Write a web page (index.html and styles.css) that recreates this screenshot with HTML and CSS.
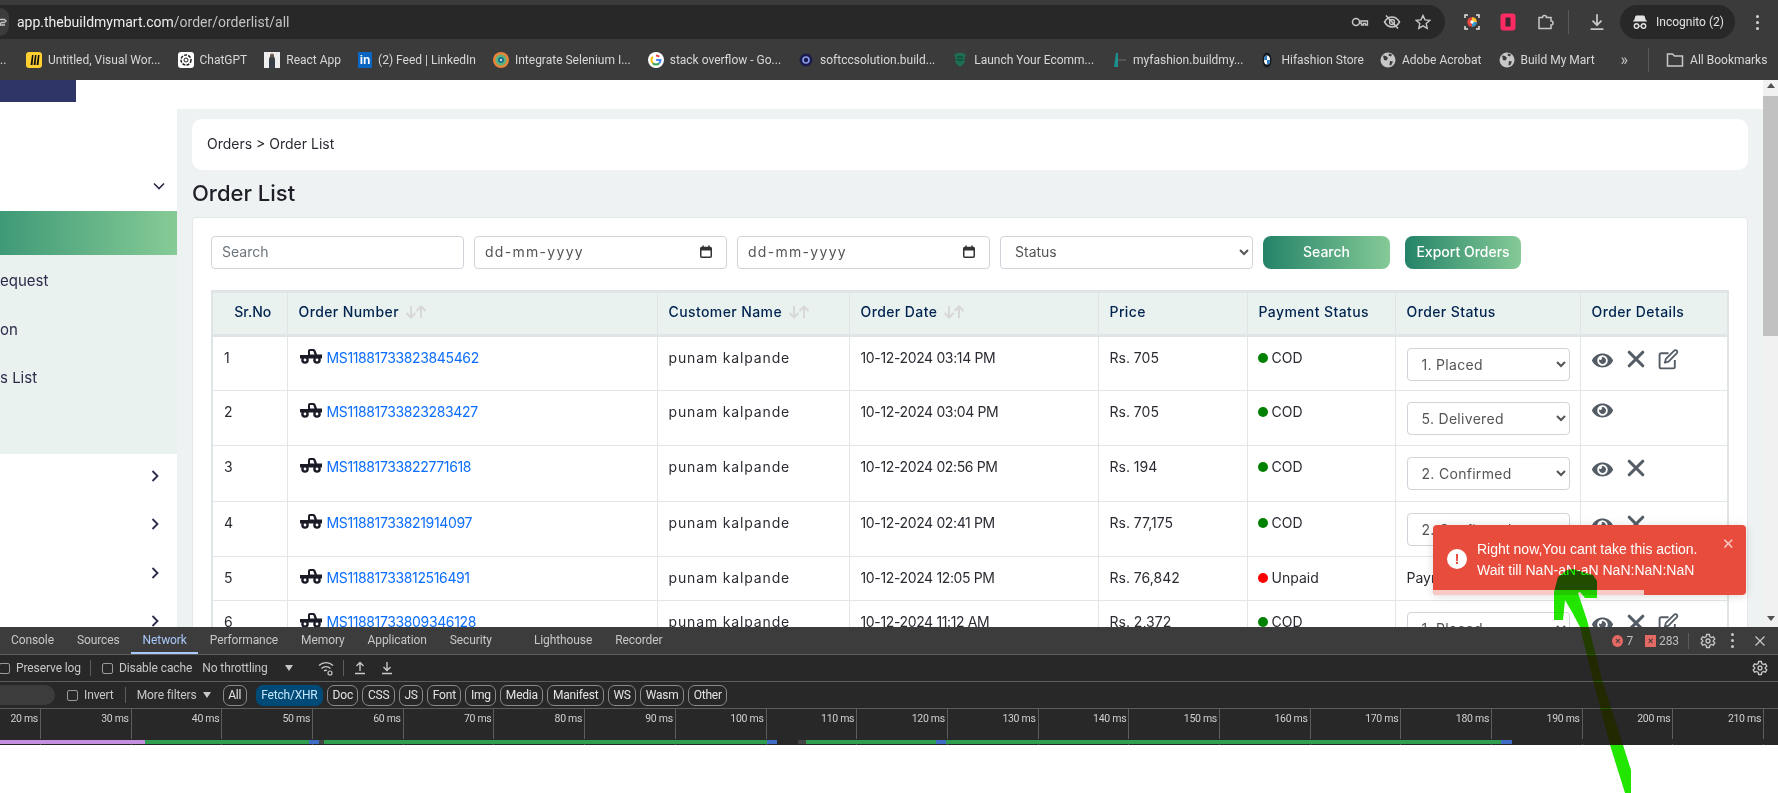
FILE: index.html
```html
<!DOCTYPE html>
<html lang="en">
<head>
    <meta charset="UTF-8">
    <title>Order List</title>
    <link rel="stylesheet" href="styles.css">
</head>
<body>
    <svg class="sprites" width="0" height="0">
        <symbol id="i-eye" viewBox="0 0 576 512"><path fill="currentColor" d="M572.52 241.4C518.29 135.59 410.93 64 288 64S57.68 135.64 3.48 241.41a32.35 32.35 0 0 0 0 29.19C57.71 376.41 165.07 448 288 448s230.32-71.64 284.52-177.41a32.35 32.35 0 0 0 0-29.19zM288 400a144 144 0 1 1 144-144 143.93 143.93 0 0 1-144 144zm0-240a95.31 95.31 0 0 0-25.31 3.79 47.85 47.85 0 0 1-66.9 66.9A95.78 95.78 0 1 0 288 160z"/></symbol>
        <symbol id="i-x" viewBox="0 0 16 16"><path d="M2 2l12 12M14 2L2 14" fill="none" stroke="currentColor" stroke-width="2.8" stroke-linecap="round"/></symbol>
        <symbol id="i-edit" viewBox="0 0 20 20"><path d="M16 10.5V17a1.5 1.5 0 0 1-1.5 1.500H3A1.500 1.500 0 0 1 1.500 17V5.500A1.500 1.500 0 0 1 3 4h7" fill="none" stroke="currentColor" stroke-width="1.800"/><path d="M7.500 9.500L15.500 1.500a1.500 1.500 0 0 1 2.300 0.200 1.500 1.500 0 0 1 0.200 2.300L10 12l-3.500 1z" fill="none" stroke="currentColor" stroke-width="1.700" stroke-linejoin="round"/></symbol>
        <symbol id="i-car" viewBox="0 0 24 16"><path fill="#1b1b27" d="M9 7V3q0-2 2-2h3.500q1.500 0 2 1.500L18 6.500h5V10.500H1V7z"/><path fill="#fff" d="M11 6.500V3h3.200l1.300 3.500z"/><circle cx="6" cy="12" r="3.800" fill="#1b1b27"/><circle cx="18" cy="12" r="3.800" fill="#1b1b27"/><circle cx="6" cy="12" r="1.400" fill="#fff"/><circle cx="18" cy="12" r="1.400" fill="#fff"/></symbol>
        <symbol id="i-globe" viewBox="0 0 16 16"><circle cx="8" cy="8" r="7.500" fill="#c7c7c7"/><path fill="#3b3b3b" d="M3 3.500l3 .5 2 2-1.500 2.500L4 8zM10 9l3 .5-2 4-1.500-.5zM9 1.500l3 1-1 2-2.500-1z"/></symbol>
        <symbol id="i-gear" viewBox="0 0 16 16"><path d="M6.600 1.500h2.800l.4 2 1.700 1 1.900-.7 1.400 2.400-1.500 1.300v1l1.500 1.300-1.400 2.400-1.900-.7-1.700 1-.4 2H6.600l-.4-2-1.700-1-1.900.7-1.400-2.400 1.500-1.300v-1L1.200 6.200l1.400-2.400 1.900.7 1.700-1z" fill="none" stroke="currentColor" stroke-width="1.300"/><circle cx="8" cy="8" r="2" fill="none" stroke="currentColor" stroke-width="1.300"/></symbol>
        <symbol id="i-down" viewBox="0 0 14 14"><path d="M7 1v8M3.500 6L7 9.500 10.500 6M2 12.500h10" fill="none" stroke="currentColor" stroke-width="1.400"/></symbol>
        <symbol id="i-up" viewBox="0 0 14 14"><path d="M7 10V2M3.500 5L7 1.500 10.500 5M2 12.500h10" fill="none" stroke="currentColor" stroke-width="1.400"/></symbol>
        <symbol id="i-sort" viewBox="0 0 22 14"><path d="M6 1v11M1.500 8L6 12.500 10.500 8M16 13V2M11.500 6L16 1.500 20.500 6" fill="none" stroke="currentColor" stroke-width="2"/></symbol>
        <symbol id="i-cal" viewBox="0 0 12 13"><rect x="0.750" y="2.500" width="10.500" height="9.750" rx="1" fill="none" stroke="#333" stroke-width="1.500"/><path d="M0.750 3h10.500v2.500H0.750z" fill="#333"/><path d="M3 0.500v2.500M9 0.500v2.500" stroke="#333" stroke-width="1.500"/></symbol>
        <symbol id="i-chev-d" viewBox="0 0 14 14"><path d="M2 4.500l5 5 5-5" fill="none" stroke="currentColor" stroke-width="1.600"/></symbol>
        <symbol id="i-chev-r" viewBox="0 0 14 14"><path d="M4.500 2l5 5-5 5" fill="none" stroke="currentColor" stroke-width="1.800"/></symbol>
    </svg>

    <!-- browser chrome -->
    <header class="browser">
        <div class="address-row">
            <div class="urlbar">
                <span class="site-chip"><svg width="9" height="14" viewBox="0 0 9 14"><path d="M0 4.500h4.500l1.500 1.500-1.500 1.500H1.500L0 9M0 10h5" fill="none" stroke="#c7c7c7" stroke-width="1.300"/></svg></span>
                <span class="url">app.thebuildmymart.com<span class="url-path">/order/orderlist/all</span></span>
                <span class="url-icons">
                    <svg width="18" height="12" viewBox="0 0 18 12"><circle cx="5" cy="6" r="3.500" fill="none" stroke="#c7c7c7" stroke-width="1.500"/><path d="M8.500 5h8v4h-2V7.500h-2V9h-2V7H8.500" fill="none" stroke="#c7c7c7" stroke-width="1.300"/></svg>
                    <svg width="18" height="18" viewBox="0 0 18 18"><path d="M1.500 9S4.500 4 9 4s7.500 5 7.500 5-3 5-7.500 5-7.500-5-7.500-5zM3 2.500l12 13" fill="none" stroke="#c7c7c7" stroke-width="1.500"/><circle cx="9" cy="9" r="2.500" fill="none" stroke="#c7c7c7" stroke-width="1.300"/></svg>
                    <svg width="16" height="16" viewBox="0 0 16 16"><path d="M8 1.500l2 4.400 4.700.5-3.500 3.200 1 4.700L8 11.900l-4.200 2.400 1-4.700L1.300 6.400 6 5.900z" fill="none" stroke="#c7c7c7" stroke-width="1.400"/></svg>
                </span>
            </div>
            <div class="ext-icons">
                <svg width="16" height="16" viewBox="0 0 16 16"><path d="M1 4V1h3M12 1h3v3M15 12v3h-3M4 15H1v-3" fill="none" stroke="#e8e8e8" stroke-width="1.500"/><circle cx="8" cy="8" r="4.800" fill="#e9453f"/><path d="M8 3.200A4.800 4.800 0 0 1 12.800 8H8z" fill="#f7c52d"/><path d="M8 8h4.800A4.800 4.800 0 0 1 8 12.800z" fill="#2e9bd6"/><circle cx="8" cy="8" r="1.700" fill="#fff"/></svg>
                <svg width="16" height="18" viewBox="0 0 16 18"><rect x="0.500" y="0.500" width="15" height="17" rx="3" fill="#ff2b62"/><rect x="5.500" y="4.500" width="5" height="9" fill="#3b2730"/></svg>
                <svg width="18" height="18" viewBox="0 0 18 18"><path d="M3 4.500h3.500a2 2 0 0 1 4 0H15V8a2 2 0 0 1 0 4v3.500H3z" fill="none" stroke="#c7c7c7" stroke-width="1.500"/></svg>
                <span class="vsep"></span>
                <svg class="chrome-dl" width="18" height="18"><use href="#i-down"/></svg>
            </div>
            <div class="incognito">
                <svg width="16" height="16" viewBox="0 0 16 16"><path d="M4 2h8l1.500 4.500h-11zM1 7h14" fill="#e3e3e3" stroke="#e3e3e3"/><circle cx="4.500" cy="12" r="2.200" fill="none" stroke="#e3e3e3" stroke-width="1.400"/><circle cx="11.500" cy="12" r="2.200" fill="none" stroke="#e3e3e3" stroke-width="1.400"/><path d="M6.700 12h2.600" stroke="#e3e3e3"/></svg>
                Incognito (2)
            </div>
            <div class="dots"><i></i><i></i><i></i></div>
        </div>
        <nav class="bookmarks">
            <span class="bm bm-cut">..</span>
            <span class="bm"><svg width="16" height="16" viewBox="0 0 16 16"><rect width="16" height="16" rx="3" fill="#ffd02f"/><path d="M4.500 13L6 3h1.500L6.500 13zM7.500 13L9 3h1.500L9.500 13zM10.500 13L12 3h1.500L12.500 13z" fill="#111"/></svg>Untitled, Visual Wor...</span>
            <span class="bm"><svg width="16" height="16" viewBox="0 0 16 16"><rect width="16" height="16" rx="3" fill="#fff"/><circle cx="8" cy="8" r="5" fill="none" stroke="#222" stroke-width="1.500" stroke-dasharray="3 1.200"/><circle cx="8" cy="8" r="2" fill="none" stroke="#222"/></svg>ChatGPT</span>
            <span class="bm"><svg width="16" height="16" viewBox="0 0 16 16"><rect width="16" height="16" fill="#eee"/><path d="M5 16V7l2-5h2l2 5v9z" fill="#3a3f46"/><circle cx="8" cy="3.500" r="2" fill="#6b5a4e"/></svg>React App</span>
            <span class="bm"><span class="in-logo">in</span>(2) Feed | LinkedIn</span>
            <span class="bm"><svg width="16" height="16" viewBox="0 0 16 16"><circle cx="8" cy="8" r="8" fill="#e8833a"/><circle cx="8" cy="8" r="5.500" fill="#5fb37c"/><circle cx="8" cy="8" r="3" fill="#1c6f8c"/><circle cx="8" cy="8" r="1" fill="#fff"/></svg>Integrate Selenium I...</span>
            <span class="bm"><svg width="16" height="16" viewBox="0 0 16 16"><circle cx="8" cy="8" r="8" fill="#fff"/><path d="M8 3.500a4.500 4.500 0 0 1 3.200 1.300" fill="none" stroke="#ea4335" stroke-width="2"/><path d="M4.800 4.800a4.500 4.500 0 0 0 0 6.400" fill="none" stroke="#fbbc05" stroke-width="2"/><path d="M4.800 11.200a4.500 4.500 0 0 0 6.400 0" fill="none" stroke="#34a853" stroke-width="2"/><path d="M11.200 11.200A4.500 4.500 0 0 0 12.500 8H8.200" fill="none" stroke="#4285f4" stroke-width="2"/></svg>stack overflow - Go...</span>
            <span class="bm"><svg width="16" height="16" viewBox="0 0 16 16"><circle cx="8" cy="8" r="6.500" fill="#1b1b4b"/><circle cx="8" cy="8" r="3" fill="none" stroke="#8a9be8" stroke-width="1.600"/></svg>softccsolution.build...</span>
            <span class="bm"><svg width="16" height="16" viewBox="0 0 16 16"><path d="M2 3l3-2h6l3 2-1.500 3v5L8 15l-4.500-4V6z" fill="#1f6e52"/><path d="M5 5h6M5 8h6" stroke="#0d3b2b"/></svg>Launch Your Ecomm...</span>
            <span class="bm bm-tight"><svg width="16" height="16" viewBox="0 0 16 16"><path d="M3 15l2-14h2v14z" fill="#1c8f8f"/><path d="M7 8h8" stroke="#555" stroke-width="2"/></svg>myfashion.buildmy...</span>
            <span class="bm bm-tight2"><svg width="16" height="16" viewBox="0 0 16 16"><ellipse cx="8" cy="8" rx="4.500" ry="7.500" fill="#16171a"/><ellipse cx="8" cy="8" rx="3" ry="4.500" fill="#fff"/><path d="M8 3.500V8H5a3 4.500 0 0 1 3-4.500zM8 8h3a3 4.500 0 0 1-3 4.500z" fill="#2b7bc4"/></svg>Hifashion Store</span>
            <span class="bm"><svg width="16" height="16"><use href="#i-globe"/></svg>Adobe Acrobat</span>
            <span class="bm"><svg width="16" height="16"><use href="#i-globe"/></svg>Build My Mart</span>
            <span class="bm-more">»</span>
            <span class="vsep"></span>
            <span class="bm bm-all"><svg width="18" height="16" viewBox="0 0 18 16"><path d="M1.500 2h5l2 2h8v10h-15z" fill="none" stroke="#c7c7c7" stroke-width="1.500"/></svg>All Bookmarks</span>
        </nav>
    </header>

    <!-- the page -->
    <div class="page">
        <aside class="sidebar">
            <div class="logo"></div>
            <div class="side-row side-first"><svg width="14" height="14"><use href="#i-chev-d"/></svg></div>
            <div class="side-active"></div>
            <ul class="submenu">
                <li>equest</li>
                <li>on</li>
                <li>s List</li>
            </ul>
            <div class="side-row side-gap"><svg width="14" height="14"><use href="#i-chev-r"/></svg></div>
            <div class="side-row"><svg width="14" height="14"><use href="#i-chev-r"/></svg></div>
            <div class="side-row"><svg width="14" height="14"><use href="#i-chev-r"/></svg></div>
            <div class="side-row"><svg width="14" height="14"><use href="#i-chev-r"/></svg></div>
        </aside>

        <main class="main">
            <div class="breadcrumb">Orders &gt; Order List</div>
            <h1 class="title">Order List</h1>
            <section class="card">
                <div class="filters">
                    <div class="field field-search">Search</div>
                    <div class="field field-date">dd-mm-yyyy<svg width="12" height="13"><use href="#i-cal"/></svg></div>
                    <div class="field field-date">dd-mm-yyyy<svg width="12" height="13"><use href="#i-cal"/></svg></div>
                    <select class="field field-status"><option>Status</option></select>
                    <button class="btn btn-search">Search</button>
                    <button class="btn btn-export">Export Orders</button>
                </div>
                <div class="table-wrap">
                    <table class="orders">
                        <colgroup>
                            <col class="c-sr"><col class="c-num"><col class="c-cust"><col class="c-date"><col class="c-price"><col class="c-pay"><col class="c-status"><col class="c-det">
                        </colgroup>
                        <thead>
                            <tr>
                                <th class="th-sr">Sr.No</th>
                                <th>Order Number <svg class="sort" width="22" height="14"><use href="#i-sort"/></svg></th>
                                <th>Customer Name <svg class="sort" width="22" height="14"><use href="#i-sort"/></svg></th>
                                <th>Order Date <svg class="sort" width="22" height="14"><use href="#i-sort"/></svg></th>
                                <th>Price</th>
                                <th>Payment Status</th>
                                <th>Order Status</th>
                                <th>Order Details</th>
                            </tr>
                        </thead>
                        <tbody>
                            <tr>
                                <td>1</td>
                                <td><svg class="car" width="24" height="16"><use href="#i-car"/></svg><a>MS11881733823845462</a></td>
                                <td class="t-name">punam kalpande</td>
                                <td class="t-date">10-12-2024 03:14 PM</td>
                                <td>Rs. 705</td>
                                <td><i class="dot dot-green"></i>COD</td>
                                <td><select class="status"><option>1. Placed</option></select></td>
                                <td class="actions"><svg class="a-eye"><use href="#i-eye"/></svg><svg class="a-x"><use href="#i-x"/></svg><svg class="a-edit"><use href="#i-edit"/></svg></td>
                            </tr>
                            <tr>
                                <td>2</td>
                                <td><svg class="car" width="24" height="16"><use href="#i-car"/></svg><a>MS11881733823283427</a></td>
                                <td class="t-name">punam kalpande</td>
                                <td class="t-date">10-12-2024 03:04 PM</td>
                                <td>Rs. 705</td>
                                <td><i class="dot dot-green"></i>COD</td>
                                <td><select class="status"><option>5. Delivered</option></select></td>
                                <td class="actions"><svg class="a-eye a-solo"><use href="#i-eye"/></svg></td>
                            </tr>
                            <tr>
                                <td>3</td>
                                <td><svg class="car" width="24" height="16"><use href="#i-car"/></svg><a>MS11881733822771618</a></td>
                                <td class="t-name">punam kalpande</td>
                                <td class="t-date">10-12-2024 02:56 PM</td>
                                <td>Rs. 194</td>
                                <td><i class="dot dot-green"></i>COD</td>
                                <td><select class="status"><option>2. Confirmed</option></select></td>
                                <td class="actions"><svg class="a-eye"><use href="#i-eye"/></svg><svg class="a-x"><use href="#i-x"/></svg></td>
                            </tr>
                            <tr>
                                <td>4</td>
                                <td><svg class="car" width="24" height="16"><use href="#i-car"/></svg><a>MS11881733821914097</a></td>
                                <td class="t-name">punam kalpande</td>
                                <td class="t-date">10-12-2024 02:41 PM</td>
                                <td>Rs. 77,175</td>
                                <td><i class="dot dot-green"></i>COD</td>
                                <td><select class="status"><option>2. Confirmed</option></select></td>
                                <td class="actions"><svg class="a-eye"><use href="#i-eye"/></svg><svg class="a-x"><use href="#i-x"/></svg></td>
                            </tr>
                            <tr class="row-short">
                                <td>5</td>
                                <td><svg class="car" width="24" height="16"><use href="#i-car"/></svg><a>MS11881733812516491</a></td>
                                <td class="t-name">punam kalpande</td>
                                <td class="t-date">10-12-2024 12:05 PM</td>
                                <td>Rs. 76,842</td>
                                <td><i class="dot dot-red"></i>Unpaid</td>
                                <td>Payment Pending</td>
                                <td class="actions"></td>
                            </tr>
                            <tr>
                                <td>6</td>
                                <td><svg class="car" width="24" height="16"><use href="#i-car"/></svg><a>MS11881733809346128</a></td>
                                <td class="t-name">punam kalpande</td>
                                <td class="t-date">10-12-2024 11:12 AM</td>
                                <td>Rs. 2,372</td>
                                <td><i class="dot dot-green"></i>COD</td>
                                <td><select class="status"><option>1. Placed</option></select></td>
                                <td class="actions"><svg class="a-eye"><use href="#i-eye"/></svg><svg class="a-x"><use href="#i-x"/></svg><svg class="a-edit"><use href="#i-edit"/></svg></td>
                            </tr>
                        </tbody>
                    </table>
                </div>
            </section>
        </main>

        <div class="scrollbar">
            <span class="arrow-up"></span>
            <div class="thumb"></div>
            <span class="arrow-down"></span>
        </div>

        <div class="toast">
            <span class="toast-icon">!</span>
            <div class="toast-text">Right now,You cant take this action.<br>Wait till NaN-aN-aN NaN:NaN:NaN</div>
            <span class="toast-close">✕</span>
            <div class="toast-progress"></div>
        </div>
    </div>

    <!-- devtools -->
    <section class="devtools">
        <div class="dt-tabs">
            <span class="tab">Console</span>
            <span class="tab">Sources</span>
            <span class="tab tab-on">Network</span>
            <span class="tab">Performance</span>
            <span class="tab">Memory</span>
            <span class="tab">Application</span>
            <span class="tab tab-sec">Security</span>
            <span class="tab">Lighthouse</span>
            <span class="tab">Recorder</span>
            <div class="dt-status">
                <i class="err-dot">×</i><span class="count">7</span>
                <i class="err-flag">×</i><span class="count">283</span>
                <span class="dt-sep"></span>
                <svg width="16" height="16"><use href="#i-gear"/></svg>
                <div class="dots dots-sm"><i></i><i></i><i></i></div>
                <svg width="12" height="12" viewBox="0 0 12 12"><path d="M1.500 1.500l9 9M10.500 1.500l-9 9" stroke="#c7c7c7" stroke-width="1.300"/></svg>
            </div>
        </div>
        <div class="dt-tools">
            <span class="check check-cut"></span><span class="t-label">Preserve log</span>
            <span class="dt-sep"></span>
            <span class="check"></span><span class="t-label">Disable cache</span>
            <span class="t-label t-throttle">No throttling</span>
            <span class="caret"></span>
            <svg class="wifi" width="18" height="18" viewBox="0 0 18 18"><path d="M2 6.500a10 10 0 0 1 14 0M4.500 9.500a6.500 6.500 0 0 1 9 0M7 12a3 3 0 0 1 3-.5" fill="none" stroke="#c7c7c7" stroke-width="1.300"/><circle cx="13" cy="14" r="2" fill="none" stroke="#c7c7c7" stroke-width="1.200"/></svg>
            <span class="dt-sep"></span>
            <svg class="io" width="14" height="14"><use href="#i-up"/></svg>
            <svg class="io" width="14" height="14"><use href="#i-down"/></svg>
            <svg class="tools-gear" width="16" height="16"><use href="#i-gear"/></svg>
        </div>
        <div class="dt-filters">
            <span class="filter-input"></span>
            <span class="check"></span><span class="t-label">Invert</span>
            <span class="dt-sep"></span>
            <span class="t-label">More filters</span>
            <span class="caret"></span>
            <span class="pill pill-all">All</span>
            <span class="pill pill-on">Fetch/XHR</span>
            <span class="pill">Doc</span>
            <span class="pill">CSS</span>
            <span class="pill">JS</span>
            <span class="pill">Font</span>
            <span class="pill">Img</span>
            <span class="pill">Media</span>
            <span class="pill">Manifest</span>
            <span class="pill">WS</span>
            <span class="pill">Wasm</span>
            <span class="pill">Other</span>
        </div>
        <div class="dt-timeline">
            <div class="tick tick-first">20 ms</div>
            <div class="tick">30 ms</div>
            <div class="tick">40 ms</div>
            <div class="tick">50 ms</div>
            <div class="tick">60 ms</div>
            <div class="tick">70 ms</div>
            <div class="tick">80 ms</div>
            <div class="tick">90 ms</div>
            <div class="tick">100 ms</div>
            <div class="tick">110 ms</div>
            <div class="tick">120 ms</div>
            <div class="tick">130 ms</div>
            <div class="tick">140 ms</div>
            <div class="tick">150 ms</div>
            <div class="tick">160 ms</div>
            <div class="tick">170 ms</div>
            <div class="tick">180 ms</div>
            <div class="tick">190 ms</div>
            <div class="tick">200 ms</div>
            <div class="tick">210 ms</div>
            <div class="bars">
                <i class="seg purple" style="width:145px"></i>
                <i class="seg green" style="width:164px"></i>
                <i class="seg blue" style="width:10px"></i>
                <i class="seg grey" style="width:5px"></i>
                <i class="seg green" style="width:443px"></i>
                <i class="seg blue" style="width:10px"></i>
                <i class="seg none" style="width:21px"></i>
                <i class="seg grey" style="width:8px"></i>
                <i class="seg green" style="width:130px"></i>
                <i class="seg blue" style="width:10px"></i>
                <i class="seg green" style="width:555px"></i>
                <i class="seg blue" style="width:11px"></i>
            </div>
        </div>
    </section>

    <!-- green hand drawn arrow on top of the screenshot -->
    <svg class="scribble" width="1778" height="793" viewBox="0 0 1778 793">
        <path fill="#22e600" d="M1567 570L1573 569L1593 575L1597 581L1597 598L1585 598L1580 592L1578 593L1587 620L1602 680L1623 745L1631 770L1631 793L1625 793L1610 745L1593 680L1580 627L1572 612L1565 600L1563 620L1554 620L1554 592L1558 577z"/>
    </svg>
</body>
</html>
```

FILE: styles.css
```css
* {
    box-sizing: border-box;
}
html, body {
    margin: 0;
    height: 100%;
    background: #fff;
}
body {
    width: 1778px;
    height: 793px;
    overflow: hidden;
    position: relative;
    font-family: Inter, "Liberation Sans", sans-serif;
    font-size: 14px;
    color: #2b2b33;
}
svg {
    flex: none;
}
.sprites {
    position: absolute;
}

/* browser chrome */
.browser {
    height: 80px;
    background: #3b3b3b;
    padding-top: 5px;
    font-family: Roboto, sans-serif;
    color: #e3e3e3;
}
.address-row {
    display: flex;
    align-items: center;
    height: 34px;
}
.urlbar {
    width: 1445px;
    height: 34px;
    background: #282828;
    border-radius: 0 17px 17px 0;
    display: flex;
    align-items: center;
}
.site-chip {
    width: 9px;
    height: 28px;
    background: #3c3c3c;
    border-radius: 0 14px 14px 0;
    margin-right: 8px;
    display: flex;
    align-items: center;
}
.url {
    font-size: 14px;
    color: #ededed;
}
.url-path {
    color: #c2c2c2;
}
.url-icons {
    margin-left: auto;
    margin-right: 14px;
    display: flex;
    align-items: center;
    gap: 14px;
}
.ext-icons {
    display: flex;
    align-items: center;
    gap: 20px;
    margin-left: 19px;
}
.ext-icons .vsep {
    margin-left: -6px;
}
.chrome-dl {
    color: #c7c7c7;
    margin-left: -1px;
}
.vsep {
    width: 1px;
    height: 24px;
    background: #5a5a5a;
}
.incognito {
    margin-left: 14px;
    width: 115px;
    height: 34px;
    border-radius: 17px;
    background: #282828;
    display: flex;
    align-items: center;
    gap: 8px;
    padding-left: 12px;
    font-size: 12px;
}
.dots {
    display: flex;
    flex-direction: column;
    gap: 3px;
    margin-left: 21px;
}
.dots i {
    width: 3px;
    height: 3px;
    border-radius: 50%;
    background: #d5d5d5;
}
.bookmarks {
    display: flex;
    align-items: center;
    height: 41px;
    font-size: 12px;
    color: #d8d8d8;
}
.bm {
    display: flex;
    align-items: center;
    gap: 6px;
    margin-right: 17px;
    white-space: nowrap;
}
.bm-cut {
    margin-right: 21px;
    width: 5px;
}
.bm-tight {
    margin-right: 16px;
}
.bm-tight2 {
    margin-right: 16px;
}
.in-logo {
    width: 14px;
    height: 16px;
    background: #0a66c2;
    color: #fff;
    font: bold 12px "Liberation Sans", sans-serif;
    text-align: center;
    line-height: 17px;
}
.bm-more {
    font-size: 16px;
    margin: 0 20px 0 9px;
    color: #c7c7c7;
}
.bm-all {
    margin: 0 0 0 17px;
}

/* page layout */
.page {
    position: relative;
    height: 547px;
    display: flex;
    overflow: hidden;
    background: #fff;
}
.sidebar {
    width: 177px;
    flex: none;
    color: #2a2a4a;
}
.logo {
    width: 76px;
    height: 22px;
    background: #2f3566;
}
.side-row {
    height: 48.5px;
    display: flex;
    align-items: center;
    justify-content: flex-end;
    padding-right: 15px;
}
.side-first {
    height: 51px;
    margin-top: 58px;
    padding-right: 11px;
}
.side-gap {
    height: 44px;
    margin-bottom: 2px;
}
.side-active {
    height: 44px;
    background: linear-gradient(90deg, #3f9a77, #86cb96);
}
.submenu {
    list-style: none;
    margin: 0;
    padding: 2px 0 0;
    height: 199px;
    background: #e9f2ef;
    font-size: 15px;
}
.submenu li {
    height: 48.5px;
    line-height: 48.5px;
}
.main {
    flex: 1;
    margin-top: 29px;
    padding: 10px 15px 0;
    background: #eef2f3;
    min-width: 0;
}
.breadcrumb {
    height: 51px;
    line-height: 49px;
    background: #fff;
    border-radius: 10px;
    padding-left: 15px;
    font-size: 14px;
}
.title {
    margin: 0;
    height: 47px;
    line-height: 46px;
    font-size: 22px;
    font-weight: 500;
    color: #1f1f28;
}
.card {
    background: #fff;
    border: 1px solid #e3e8e8;
    border-radius: 4px 4px 0 0;
    padding: 18px 18px 0;
    height: 500px;
}
.filters {
    display: flex;
    gap: 10px;
    height: 33px;
    margin-bottom: 21px;
}
.field {
    height: 33px;
    width: 253px;
    border: 1px solid #ced4da;
    border-radius: 4px;
    background: #fff;
    padding: 0 10px 2px;
    display: flex;
    align-items: center;
    font: inherit;
    color: #6c757d;
}
.field-date {
    justify-content: space-between;
    padding-right: 14px;
    color: #555;
    letter-spacing: 1.3px;
}
.field-status {
    color: #555;
    padding-left: 10px;
}
.btn {
    height: 33px;
    border: 0;
    border-radius: 8px;
    color: #fff;
    padding: 0 0 2px;
    font: 500 14px Inter, sans-serif;
    background: linear-gradient(90deg, #248368, #85ca97);
}
.btn-search {
    width: 127px;
}
.btn-export {
    width: 116px;
    margin-left: 5px;
}

/* order table */
.table-wrap {
    width: 1518px;
    border: 2px solid #dfe4e6;
    border-top-width: 3px;
    border-bottom: 0;
}
.orders {
    width: 1514px;
    table-layout: fixed;
    border-collapse: collapse;
    font-size: 14px;
}
.c-sr { width: 74px; }
.c-num { width: 370px; }
.c-cust { width: 192px; }
.c-date { width: 249px; }
.c-price { width: 149px; }
.c-pay { width: 148px; }
.c-status { width: 185px; }
.c-det { width: 147px; }
.orders th {
    height: 42px;
    padding: 0 11px 3px;
    background: #e9f2ef;
    border-right: 1px solid #dfe4e6;
    border-bottom: 3px solid #dfe4e6;
    text-align: left;
    font-weight: 500;
    color: #00234f;
    letter-spacing: 0.4px;
    white-space: nowrap;
}
.orders .th-sr {
    text-align: center;
    letter-spacing: 0;
    padding-left: 14px;
    padding-right: 8px;
}
.orders th:last-child,
.orders td:last-child {
    border-right: 0;
}
.sort {
    color: #d8d8d8;
    vertical-align: -2px;
    margin-left: 2px;
}
.orders td {
    height: 55.4px;
    padding: 10px 11px 0;
    vertical-align: top;
    border-right: 1px solid #e2e6e8;
    border-bottom: 1px solid #e2e6e8;
    line-height: 21px;
    white-space: nowrap;
    overflow: hidden;
}
.orders .row-short td {
    height: 44px;
}
.t-name {
    letter-spacing: 0.85px;
}
.t-date {
    letter-spacing: -0.36px;
}
.car {
    vertical-align: -1px;
    margin-right: 4px;
}
.orders a {
    color: #0d6efd;
    letter-spacing: -0.37px;
}
.dot {
    display: inline-block;
    width: 10px;
    height: 10px;
    border-radius: 50%;
    margin: 0 4px 0 -1px;
}
.dot-green {
    background: #008000;
}
.dot-red {
    background: #f00;
}
.status {
    display: block;
    width: 163px;
    height: 33px;
    margin-top: 1px;
    border: 1px solid #ced4da;
    border-radius: 4px;
    background: #fff;
    padding-left: 10px;
    font: inherit;
    letter-spacing: 0.3px;
    color: #555;
}
.actions {
    color: #545c66;
}
.actions svg {
    vertical-align: top;
}
.a-eye {
    width: 21px;
    height: 19px;
    margin: 4px 14px 0 0;
}
.a-solo {
    margin-top: 0;
}
.a-x {
    width: 18px;
    height: 18px;
    margin: 3px 13px 0 0;
}
.a-edit {
    width: 21px;
    height: 21px;
    margin-top: 2px;
}

/* fake scrollbar */
.scrollbar {
    width: 15px;
    flex: none;
    background: #f1f1f1;
    display: flex;
    flex-direction: column;
    align-items: center;
}
.thumb {
    width: 100%;
    height: 240px;
    background: #c1c1c1;
    margin-top: 8px;
}
.arrow-up,
.arrow-down {
    width: 0;
    height: 0;
    border-left: 4px solid transparent;
    border-right: 4px solid transparent;
}
.arrow-up {
    border-bottom: 5px solid #505050;
    margin-top: 3px;
}
.arrow-down {
    border-top: 5px solid #505050;
    margin-top: auto;
    margin-bottom: 6px;
}

/* toast */
.toast {
    position: absolute;
    left: 1433px;
    top: 445px;
    width: 313px;
    height: 70px;
    background: #e74c3c;
    border-radius: 4px;
    box-shadow: 0 1px 10px rgba(0, 0, 0, 0.15);
    display: flex;
    padding: 14px 0 0 14px;
    color: #fff;
    font: 14px/21px "Liberation Sans", Arial, sans-serif;
    overflow: hidden;
}
.toast-icon {
    width: 20px;
    height: 20px;
    margin-top: 10px;
    border-radius: 50%;
    background: #fff;
    color: #e74c3c;
    font: bold 15px/20px "Liberation Sans", sans-serif;
    text-align: center;
    flex: none;
}
.toast-text {
    margin-left: 10px;
    white-space: nowrap;
}
.toast-close {
    position: absolute;
    right: 11px;
    top: 8px;
    font-size: 15px;
    color: rgba(255, 255, 255, 0.7);
}
.toast-progress {
    position: absolute;
    left: 0;
    bottom: 0;
    width: 211px;
    height: 5px;
    background: rgba(255, 255, 255, 0.7);
}

/* devtools */
.devtools {
    height: 118px;
    background: #282828;
    font-family: Roboto, sans-serif;
    font-size: 12px;
    letter-spacing: -0.1px;
    color: #c7c7c7;
}
.dt-tabs {
    height: 28px;
    background: #3c3c3c;
    border-bottom: 1px solid #5c5c5c;
    display: flex;
    align-items: stretch;
}
.tab {
    padding: 0 11.5px;
    line-height: 26px;
}
.tab:first-child {
    padding-left: 11px;
}
.tab-on {
    color: #a8c7fa;
    border-bottom: 2px solid #a8c7fa;
}
.tab-sec {
    margin-right: 19px;
}
.dt-status {
    margin-left: auto;
    display: flex;
    align-items: center;
    padding-right: 12px;
}
.dt-status .dots {
    margin: 0 20px 0 15px;
}
.dots-sm i {
    width: 3px;
    height: 3px;
    background: #c7c7c7;
}
.err-dot,
.err-flag {
    width: 11px;
    height: 12px;
    background: #e46962;
    color: #3c3c3c;
    font: bold 9px/12px "Liberation Sans", sans-serif;
    text-align: center;
    margin-right: 3px;
}
.err-dot {
    border-radius: 50%;
}
.err-flag {
    margin-left: 12px;
}
.count {
    color: #bdbdbd;
}
.dt-status .dt-sep {
    margin: 0 11px 0 9px;
}
.dt-sep {
    width: 1px;
    height: 16px;
    background: #5c5c5c;
}
.dt-tools,
.dt-filters {
    height: 27px;
    border-bottom: 1px solid #5c5c5c;
    display: flex;
    align-items: center;
}
.check {
    width: 11px;
    height: 11px;
    border: 1px solid #9a9a9a;
    border-radius: 2px;
    margin-right: 6px;
}
.check-cut {
    margin-left: -1px;
}
.dt-tools .dt-sep {
    margin: 0 11px 0 9px;
}
.t-throttle {
    margin-left: 10px;
}
.caret {
    width: 0;
    height: 0;
    border-left: 4px solid transparent;
    border-right: 4px solid transparent;
    border-top: 6px solid #c7c7c7;
}
.dt-tools .caret {
    margin: 0 24px 0 17px;
}
.wifi {
    margin-right: 8px;
}
.dt-tools .wifi + .dt-sep {
    margin: 0 9px 0 0;
}
.io {
    margin-right: 13px;
}
.tools-gear {
    margin-left: auto;
    margin-right: 10px;
}
.filter-input {
    width: 55px;
    height: 20px;
    background: #3c3c3c;
    border-radius: 0 10px 10px 0;
    margin-right: 12px;
}
.dt-filters .dt-sep {
    margin: 0 11px 0 11px;
}
.dt-filters .caret {
    margin: 0 12px 0 6px;
}
.pill {
    height: 21px;
    line-height: 19px;
    border: 1px solid #8a8a8a;
    border-radius: 7px;
    padding: 0 4.500px;
    margin-right: 4px;
    letter-spacing: -0.2px;
    color: #e3e3e3;
}
.pill-all {
    margin-right: 9px;
}
.pill-on {
    background: #004a77;
    border-color: #004a77;
    color: #c2e7ff;
}
.dt-timeline {
    position: relative;
    height: 36px;
    display: flex;
    overflow: hidden;
}
.tick {
    flex: none;
    width: 90.7px;
    border-right: 1px solid #5c5c5c;
    padding: 3px 2px 0 0;
    text-align: right;
    font-size: 10.5px;
    letter-spacing: -0.3px;
    color: #d0d0d0;
    white-space: nowrap;
}
.tick-first {
    width: 41px;
}
.bars {
    position: absolute;
    left: 0;
    right: 0;
    top: 30px;
    height: 5px;
    display: flex;
    align-items: center;
    background: #282828;
}
.seg {
    height: 4px;
    flex: none;
}
.purple { background: #c58fe0; }
.green { background: #2f9e4f; }
.blue { background: #3f6cc4; }
.grey { background: #444; }

/* annotation */
.scribble {
    position: absolute;
    left: 0;
    top: 0;
    mix-blend-mode: darken;
    pointer-events: none;
}
```
